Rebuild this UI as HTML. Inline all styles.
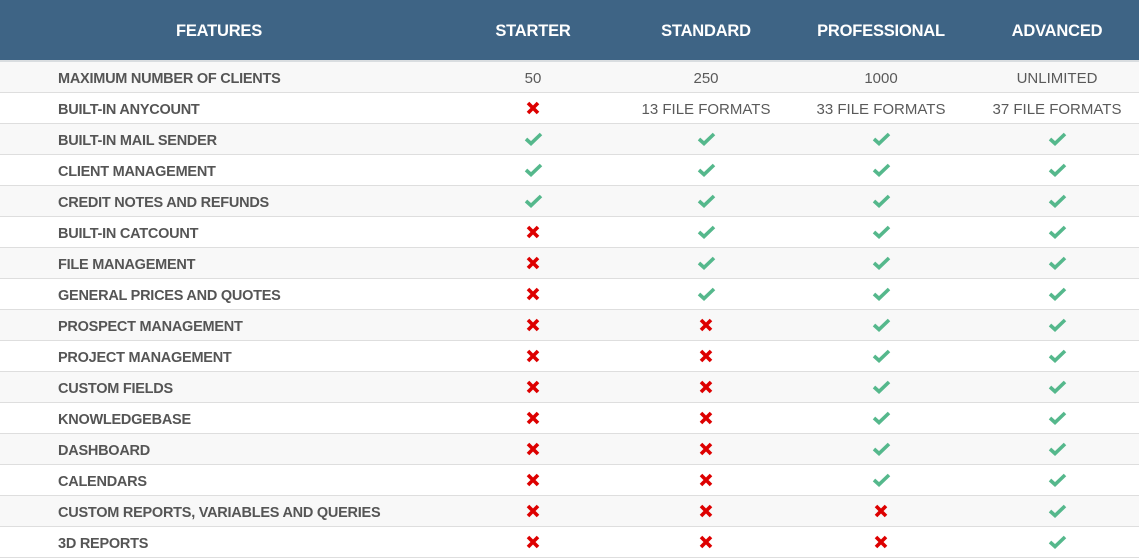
<!DOCTYPE html>
<html><head><style>
body{margin:0;width:1139px;height:559px;overflow:hidden;background:#fff;font-family:"Liberation Sans",sans-serif;}
.hdr{position:absolute;left:0;top:0;width:1139px;height:60px;background:#3e6485;border-bottom:2px solid #d9dde0;}
.h{position:absolute;top:22px;width:200px;text-align:center;color:#fff;font-weight:bold;font-size:16.5px;letter-spacing:-0.2px}
.row{position:absolute;left:0;width:1139px;height:30px;border-bottom:1px solid #dedede;}
.f{position:absolute;left:58px;top:9px;font-weight:bold;font-size:14.5px;color:#555;letter-spacing:-0.25px}
.c{position:absolute;top:8px;width:200px;text-align:center;font-size:15px;color:#5a5a5a;height:20px}
</style></head><body>
<div class="hdr">
<div class="h" style="left:119px">FEATURES</div>
<div class="h" style="left:433px">STARTER</div>
<div class="h" style="left:606px">STANDARD</div>
<div class="h" style="left:781px">PROFESSIONAL</div>
<div class="h" style="left:957px">ADVANCED</div>
</div>
<div id="rows" style="position:absolute;top:62px;left:0"></div>
<script>
var Y='<svg width="19" height="14" viewBox="0 0 19 14"><path d="M2 7 L7 11.5 L17 2" fill="none" stroke="#55b88c" stroke-width="3.6"/></svg>';
var N='<svg width="14" height="14" viewBox="0 0 14 14"><path d="M2 2 L12 12 M12 2 L2 12" stroke="#d00" stroke-width="3.6"/></svg>';
var d=[
["MAXIMUM NUMBER OF CLIENTS","50","250","1000","UNLIMITED"],
["BUILT-IN ANYCOUNT",0,"13 FILE FORMATS","33 FILE FORMATS","37 FILE FORMATS"],
["BUILT-IN MAIL SENDER",1,1,1,1],
["CLIENT MANAGEMENT",1,1,1,1],
["CREDIT NOTES AND REFUNDS",1,1,1,1],
["BUILT-IN CATCOUNT",0,1,1,1],
["FILE MANAGEMENT",0,1,1,1],
["GENERAL PRICES AND QUOTES",0,1,1,1],
["PROSPECT MANAGEMENT",0,0,1,1],
["PROJECT MANAGEMENT",0,0,1,1],
["CUSTOM FIELDS",0,0,1,1],
["KNOWLEDGEBASE",0,0,1,1],
["DASHBOARD",0,0,1,1],
["CALENDARS",0,0,1,1],
["CUSTOM REPORTS, VARIABLES AND QUERIES",0,0,0,1],
["3D REPORTS",0,0,0,1]];
var L=[433,606,781,957],h='';
d.forEach(function(r,i){
h+='<div class="row" style="top:'+(i*31)+'px;background:'+(i%2?'#fff':'#f8f8f8')+'"><div class="f">'+r[0]+'</div>';
for(var j=1;j<5;j++){var v=r[j];h+='<div class="c" style="left:'+L[j-1]+'px">'+(v===1?Y:v===0?N:v)+'</div>';}
h+='</div>';});
document.getElementById('rows').innerHTML=h;
</script>
</body></html>
